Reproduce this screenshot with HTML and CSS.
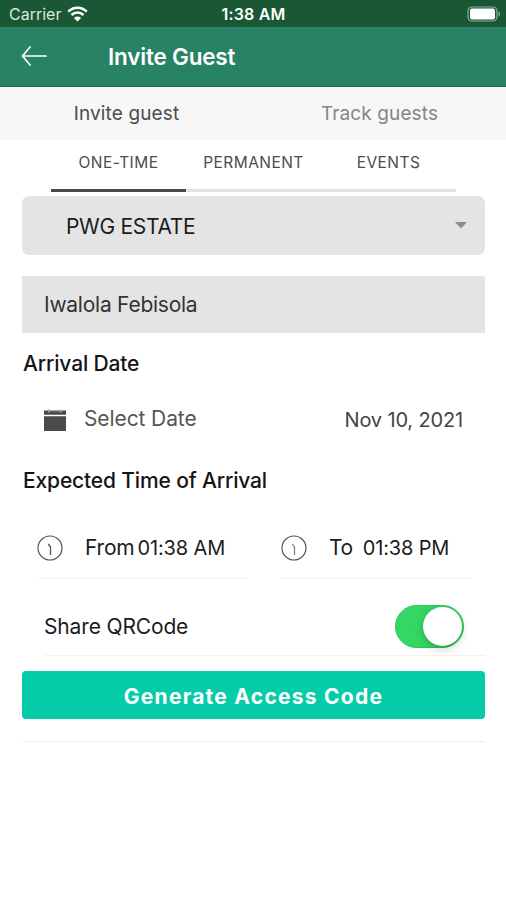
FILE: index.html
```html
<!DOCTYPE html>
<html lang="en">
<head>
<meta charset="utf-8">
<title>Invite Guest</title>
<link rel="stylesheet" href="styles.css">
</head>
<body>
<div class="status">
  <div class="status-left">
    <span class="carrier">Carrier</span>
    <svg class="wifi" width="21" height="16" viewBox="0 0 21 16" fill="none" stroke="#fff" stroke-width="2.5"><path d="M1.2 5.6C6.5.4 14.500.4 19.800 5.600M4.500 9C7.900 5.600 13.100 5.600 16.500 9"/><path d="M10.500 15.500 6.900 11.900C9 10.100 12 10.100 14.100 11.900Z" fill="#fff" stroke="none"/></svg>
  </div>
  <span class="clock">1:38 AM</span>
  <svg class="battery" width="34" height="16" viewBox="0 0 34 16"><rect x="1" y="1" width="29" height="14" rx="4" fill="none" stroke="#8fae9c" stroke-width="1.200"/><rect x="3" y="2.500" width="25" height="11" rx="2" fill="#fff"/><path d="M31.500 5.500C33.500 6 33.500 10 31.500 10.500Z" fill="#8fae9c"/></svg>
</div>
<header class="header">
  <svg class="back" width="27" height="20" viewBox="0 0 27 20" fill="none" stroke="#fff" stroke-width="1.700" stroke-linecap="round" stroke-linejoin="round"><path d="M25 10H1.500M9 1 1.500 10 9 19"/></svg>
  <h1 class="title">Invite Guest</h1>
</header>
<nav class="tabs">
  <span class="tab tab-active">Invite guest</span>
  <span class="tab">Track guests</span>
</nav>
<nav class="segments">
  <span class="segment segment-active">ONE-TIME</span>
  <span class="segment">PERMANENT</span>
  <span class="segment">EVENTS</span>
</nav>
<main class="form">
  <div class="select"><span class="estate">PWG ESTATE</span><svg width="12" height="7" viewBox="0 0 12 7"><path d="M0 0h12L6 6.500Z" fill="#8c8c8c"/></svg></div>
  <div class="input"><span class="guest">Iwalola Febisola</span></div>
  <h2 class="label label-date">Arrival Date</h2>
  <div class="date-row">
    <svg class="calendar" width="24" height="24" viewBox="0 0 24 24"><path d="M1 2.500h22v4.300H1ZM1 8.200h22V23H1Z" fill="#4b4b4b"/><path d="M6 1v3.500M18 1v3.500" stroke="#bbb" stroke-width="1.300"/><path d="M7 3h10" stroke="#999" stroke-width=".8"/></svg>
    <span class="select-date">Select Date</span>
    <span class="date">Nov 10, 2021</span>
  </div>
  <h2 class="label label-time">Expected Time of Arrival</h2>
  <div class="times">
    <div class="time">
      <svg width="26" height="26" viewBox="0 0 26 26" fill="none" stroke="#555"><circle cx="13" cy="13" r="12" stroke-width="1.200"/><path d="M13.500 20v-8L11.300 9" stroke-width="1.300"/></svg>
      <span class="from">From</span><span class="from-value">01:38 AM</span>
    </div>
    <div class="time time-to">
      <svg width="26" height="26" viewBox="0 0 26 26" fill="none" stroke="#555"><circle cx="13" cy="13" r="12" stroke-width="1.200"/><path d="M13.500 20v-8L11.300 9" stroke-width="1.200" stroke="#777"/></svg>
      <span class="to">To</span><span class="to-value">01:38 PM</span>
    </div>
  </div>
  <div class="share"><span class="share-label">Share QRCode</span><span class="switch"><span class="knob"></span></span></div>
  <div class="button" role="button">Generate Access Code</div>
  <hr class="rule">
</main>
</body>
</html>
```
FILE: styles.css
```css
* { box-sizing: border-box; }
body { margin: 0; height: 900px; overflow: hidden; background: #fff; color: #1c1c1c; font-family: Inter, "Liberation Sans", sans-serif; font-size: 21px; line-height: 26px; white-space: nowrap; }
svg { display: block; flex: none; }
h1, h2 { margin: 0; }
.status { height: 27px; padding: 1px 5px 0 9px; background: #195735; color: #fff; display: grid; grid-template-columns: 1fr auto 1fr; align-items: center; font-size: 16px; }
.status-left { display: flex; align-items: center; gap: 6px; }
.carrier { color: #dbe7df; }
.clock { margin-right: 3px; font-weight: 600; font-size: 16px; letter-spacing: .15px; }
.battery { justify-self: end; }
.header { height: 60px; padding: 0 21px; background: #288265; border-bottom: 1px solid #176b4d; color: #fff; display: flex; align-items: center; }
.back { margin-top: -1px; }
.title { margin: 1px 0 0 60px; font-size: 22.500px; font-weight: 600; letter-spacing: -.2px; }
.tabs { height: 53px; background: #f7f7f7; display: grid; grid-template-columns: 1fr 1fr; text-align: center; align-items: center; font-size: 19px; font-weight: 400; letter-spacing: .12px; color: #858585; }
.tab-active { color: #4c4c4c; }
.segments { width: 405px; height: 52px; margin-left: 51px; display: grid; grid-template-columns: repeat(3, 1fr); text-align: center; font-size: 15.500px; line-height: 45px; letter-spacing: .45px; color: #4c4c4c; }
.segment { border-bottom: 3px solid #e3e3e3; }
.segment-active { border-color: #484848; }
.form { margin: 4px 21px 0 22px; }
.select { height: 59px; border-radius: 7px; background: #e4e4e4; padding: 2px 18px 0 44px; display: flex; align-items: center; justify-content: space-between; letter-spacing: -.3px; }
.select svg { margin-top: -2px; }
.input { height: 57px; margin-top: 21px; padding: 1px 0 0 22px; background: #e4e4e4; display: flex; align-items: center; color: #333; letter-spacing: -.25px; }
.label { padding-left: 1px; font-size: 21px; font-weight: 500; color: #151515; letter-spacing: -.15px; }
.label-date { margin-top: 18px; }
.date-row { height: 30px; margin-top: 27px; padding: 0 21px; display: flex; align-items: center; color: #555; }
.calendar { margin-top: 1px; }
.select-date { margin-left: 17px; letter-spacing: -.1px; }
.date { margin-left: auto; padding: 1px 1px 0 0; color: #444; font-size: 20px; letter-spacing: -.15px; }
.label-time { margin-top: 34px; }
.times { margin: 24px 13px 0 15px; height: 61px; display: flex; gap: 32px; }
.time { width: 211px; border-bottom: 1px solid #f0f0f0; display: flex; align-items: center; }
.time-to { width: 192px; padding-left: 1px; }
.from { margin-left: 22px; letter-spacing: -.2px; }
.from-value { margin-left: 3px; font-size: 20px; letter-spacing: -.15px; }
.to { margin-left: 22px; letter-spacing: -.4px; }
.to-value { margin-left: 10px; font-size: 20px; letter-spacing: -.15px; }
.share { height: 77px; margin-left: 22px; padding: 18px 21px 0 0; border-bottom: 1px solid #f3f3f3; display: flex; align-items: center; justify-content: space-between; }
.share-label { padding-top: 1px; letter-spacing: -.15px; }
.switch { width: 69px; height: 43px; border-radius: 22px; background: #34d763; border: 1px solid #28c957; padding: 1px; display: flex; justify-content: flex-end; }
.knob { width: 39px; height: 39px; border-radius: 50%; background: #fff; box-shadow: 0 3px 10px rgba(0,0,0,.2), 0 1px 1px rgba(0,0,0,.15); }
.button { height: 48px; margin-top: 15px; padding-top: 3px; border-radius: 4px; background: #04cba8; color: #fff; display: flex; align-items: center; justify-content: center; font-size: 21px; font-weight: 700; letter-spacing: 1.250px; }
.rule { margin: 22px 0 0; border: 0; height: 1px; background: #ededed; }
```
